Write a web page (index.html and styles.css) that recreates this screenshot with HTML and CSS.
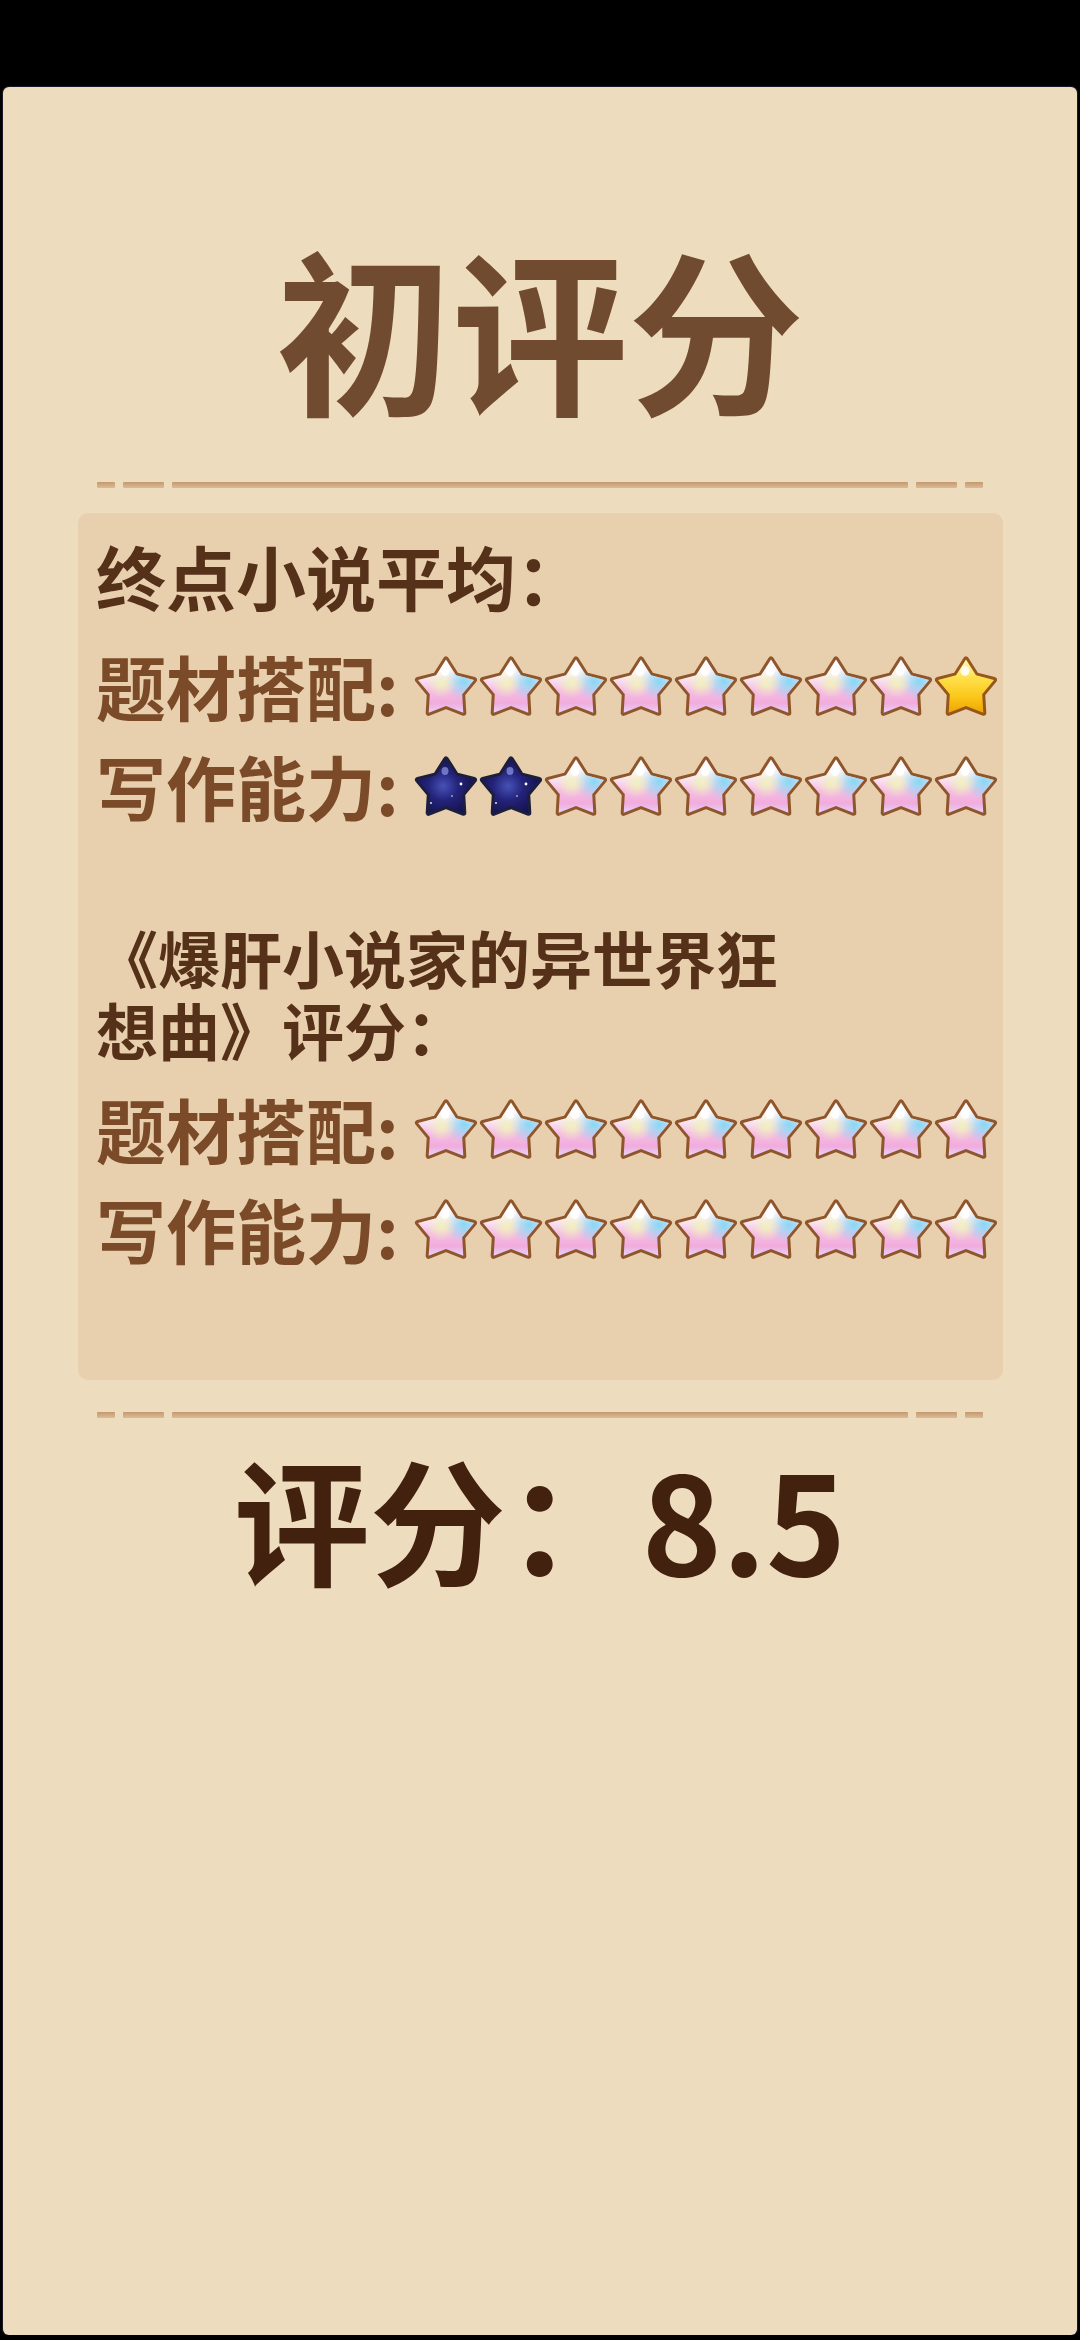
FILE: index.html
```html
<!DOCTYPE html>
<html lang="zh-CN">
<head>
    <meta charset="UTF-8">
    <meta name="viewport" content="width=device-width, initial-scale=1.0">
    <title>初评分</title>
    <link rel="stylesheet" href="styles.css">
</head>
<body>
    <!-- star sprites, referenced below with <use> -->
    <svg class="svg-defs" aria-hidden="true">
        <defs>
            <linearGradient id="pearl-base" x1="0" y1="0" x2="0" y2="1">
                <stop offset="0" stop-color="#ffffff"/>
                <stop offset="0.3" stop-color="#fbf0f6"/>
                <stop offset="0.58" stop-color="#f6bde4"/>
                <stop offset="0.82" stop-color="#f1acdc"/>
                <stop offset="1" stop-color="#e4d4fb"/>
            </linearGradient>
            <radialGradient id="pearl-cyan" cx="0.82" cy="0.42" r="0.34">
                <stop offset="0" stop-color="#86d8f6" stop-opacity="1"/>
                <stop offset="1" stop-color="#86d8f6" stop-opacity="0"/>
            </radialGradient>
            <radialGradient id="pearl-lime" cx="0.42" cy="0.46" r="0.26">
                <stop offset="0" stop-color="#eef6b4" stop-opacity="0.85"/>
                <stop offset="1" stop-color="#eef6b4" stop-opacity="0"/>
            </radialGradient>
            <radialGradient id="navy-base" cx="0.45" cy="0.5" r="0.6">
                <stop offset="0" stop-color="#4652b6"/>
                <stop offset="0.45" stop-color="#24237a"/>
                <stop offset="1" stop-color="#13114c"/>
            </radialGradient>
            <linearGradient id="gold-base" x1="0" y1="0" x2="0" y2="1">
                <stop offset="0" stop-color="#fff7b8"/>
                <stop offset="0.35" stop-color="#ffe04a"/>
                <stop offset="0.7" stop-color="#fbc71a"/>
                <stop offset="1" stop-color="#eea600"/>
            </linearGradient>
            <path id="star-shape" d="M32 3.5 L42 19.3 L60 23.9 L48.2 38.2 L49.3 56.8 L32 50 L14.7 56.8 L15.8 38.2 L4 23.9 L22 19.3 Z"/>
        </defs>
        <symbol id="star-pearl" viewBox="0 0 64 61">
            <use href="#star-shape" fill="url(#pearl-base)" stroke="#8f552b" stroke-width="6" stroke-linejoin="round" paint-order="stroke"/>
            <use href="#star-shape" fill="url(#pearl-cyan)"/>
            <use href="#star-shape" fill="url(#pearl-lime)"/>
            <ellipse cx="31" cy="15" rx="4.5" ry="5" fill="#ffffff" opacity="0.9"/>
        </symbol>
        <symbol id="star-navy" viewBox="0 0 64 61">
            <use href="#star-shape" fill="url(#navy-base)" stroke="#1d1e3b" stroke-width="6" stroke-linejoin="round" paint-order="stroke"/>
            <ellipse cx="31" cy="15" rx="3.5" ry="4" fill="#8f98e6" opacity="0.7"/>
            <circle cx="47" cy="28" r="1.4" fill="#ffffff"/>
            <circle cx="17" cy="47" r="1.1" fill="#ffffff" opacity="0.8"/>
            <circle cx="38" cy="40" r="0.9" fill="#c9cfff" opacity="0.8"/>
        </symbol>
        <symbol id="star-gold" viewBox="0 0 64 61">
            <use href="#star-shape" fill="url(#gold-base)" stroke="#97561b" stroke-width="6" stroke-linejoin="round" paint-order="stroke"/>
            <ellipse cx="31" cy="15" rx="4.5" ry="5" fill="#ffffff" opacity="0.85"/>
        </symbol>
    </svg>

    <div class="card">
        <h1 class="title">初评分</h1>

        <div class="divider">
            <span class="seg dot"></span>
            <span class="seg dash"></span>
            <span class="seg long"></span>
            <span class="seg dash"></span>
            <span class="seg dot"></span>
        </div>

        <div class="panel">
            <div class="heading">终点小说平均：</div>
            <div class="row">
                <span class="label">题材搭配:</span>
                <div class="stars">
                    <svg class="star"><use href="#star-pearl"/></svg>
                    <svg class="star"><use href="#star-pearl"/></svg>
                    <svg class="star"><use href="#star-pearl"/></svg>
                    <svg class="star"><use href="#star-pearl"/></svg>
                    <svg class="star"><use href="#star-pearl"/></svg>
                    <svg class="star"><use href="#star-pearl"/></svg>
                    <svg class="star"><use href="#star-pearl"/></svg>
                    <svg class="star"><use href="#star-pearl"/></svg>
                    <svg class="star"><use href="#star-gold"/></svg>
                </div>
            </div>
            <div class="row">
                <span class="label">写作能力:</span>
                <div class="stars">
                    <svg class="star"><use href="#star-navy"/></svg>
                    <svg class="star"><use href="#star-navy"/></svg>
                    <svg class="star"><use href="#star-pearl"/></svg>
                    <svg class="star"><use href="#star-pearl"/></svg>
                    <svg class="star"><use href="#star-pearl"/></svg>
                    <svg class="star"><use href="#star-pearl"/></svg>
                    <svg class="star"><use href="#star-pearl"/></svg>
                    <svg class="star"><use href="#star-pearl"/></svg>
                    <svg class="star"><use href="#star-pearl"/></svg>
                </div>
            </div>

            <div class="novel-title">《爆肝小说家的异世界狂想曲》评分：</div>
            <div class="row">
                <span class="label">题材搭配:</span>
                <div class="stars">
                    <svg class="star"><use href="#star-pearl"/></svg>
                    <svg class="star"><use href="#star-pearl"/></svg>
                    <svg class="star"><use href="#star-pearl"/></svg>
                    <svg class="star"><use href="#star-pearl"/></svg>
                    <svg class="star"><use href="#star-pearl"/></svg>
                    <svg class="star"><use href="#star-pearl"/></svg>
                    <svg class="star"><use href="#star-pearl"/></svg>
                    <svg class="star"><use href="#star-pearl"/></svg>
                    <svg class="star"><use href="#star-pearl"/></svg>
                </div>
            </div>
            <div class="row">
                <span class="label">写作能力:</span>
                <div class="stars">
                    <svg class="star"><use href="#star-pearl"/></svg>
                    <svg class="star"><use href="#star-pearl"/></svg>
                    <svg class="star"><use href="#star-pearl"/></svg>
                    <svg class="star"><use href="#star-pearl"/></svg>
                    <svg class="star"><use href="#star-pearl"/></svg>
                    <svg class="star"><use href="#star-pearl"/></svg>
                    <svg class="star"><use href="#star-pearl"/></svg>
                    <svg class="star"><use href="#star-pearl"/></svg>
                    <svg class="star"><use href="#star-pearl"/></svg>
                </div>
            </div>
        </div>

        <div class="divider divider-bottom">
            <span class="seg dot"></span>
            <span class="seg dash"></span>
            <span class="seg long"></span>
            <span class="seg dash"></span>
            <span class="seg dot"></span>
        </div>

        <div class="score">评分：8.5</div>
    </div>
</body>
</html>
```

FILE: styles.css
```css
body {
    margin: 0;
    background-color: #000;
    font-family: "Noto Sans CJK SC", "Noto Sans", sans-serif;
    font-weight: 700;
}

.svg-defs {
    display: block;
    width: 0;
    height: 0;
    overflow: hidden;
}

.card {
    margin: 87px 3px 0 3px;
    height: 2248px;
    padding-top: 151px;
    box-sizing: border-box;
    background: #eedcbe;
    border-radius: 6px;
    box-shadow: 0 0 0 1px rgba(45, 40, 60, 0.65);
}

.title {
    margin: 0;
    font-size: 176px;
    line-height: 176px;
    font-weight: 700;
    color: #714b2f;
    text-align: center;
}

/* dashed rule: dot, dash, long bar, dash, dot */
.divider {
    display: flex;
    gap: 8px;
    height: 6px;
    margin: 68px 94px 0 94px;
}

.divider .seg {
    display: block;
    height: 6px;
    border-radius: 1px;
    background: linear-gradient(#c39a6f, #dcbb97);
}

.divider .dot {
    width: 18px;
}

.divider .dash {
    width: 41px;
}

.divider .long {
    flex: 1;
}

.divider-bottom {
    margin-top: 32px;
}

.panel {
    margin: 25px 74px 0 75px;
    padding: 13px 18px 101px 18px;
    background: #e8d0ae;
    border-radius: 10px;
}

.heading {
    font-size: 70px;
    line-height: 100px;
    color: #56311a;
    margin-bottom: 10px;
}

.row {
    display: flex;
    align-items: center;
    height: 100px;
}

.label {
    font-size: 70px;
    line-height: 100px;
    color: #7a4a29;
    margin-right: 15px;
    white-space: nowrap;
}

.stars {
    display: flex;
    gap: 1px;
}

.star {
    display: block;
    width: 64px;
    height: 61px;
}

.novel-title {
    max-width: 720px;
    margin: 85px 0 14px 0;
    font-size: 62px;
    line-height: 72px;
    color: #56311a;
}

.score {
    margin-top: 31px;
    font-size: 136px;
    line-height: 136px;
    color: #43210f;
    text-align: center;
}
```
